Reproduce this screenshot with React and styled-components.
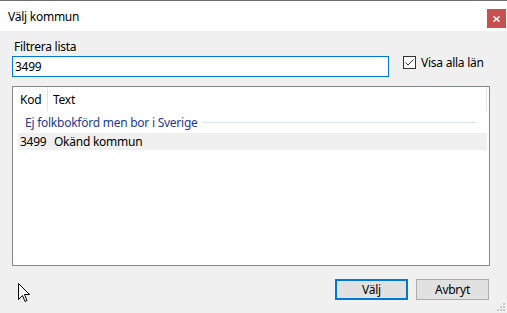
import React from "react";
import styled, { createGlobalStyle } from "styled-components";

const GlobalStyle = createGlobalStyle`
  html, body {
    margin: 0;
    padding: 0;
    background: #f0f0f0;
  }
  * {
    box-sizing: border-box;
  }
`;

const Window = styled.div`
  position: relative;
  width: 507px;
  height: 313px;
  display: flex;
  flex-direction: column;
  background: #f0f0f0;
  border-top: 1px solid #6f6f6f;
  font-family: "Noto Sans", "Liberation Sans", sans-serif;
  font-size: 12px;
  letter-spacing: -0.25px;
  color: #000;
  overflow: hidden;
`;

const TitleBar = styled.div`
  height: 30px;
  background: #fff;
  display: flex;
  align-items: center;
  justify-content: space-between;
  padding: 0 1px 0 8px;
  font-size: 12px;
`;

const CloseButton = styled.div`
  width: 19px;
  height: 19px;
  background: #c75050;
  display: flex;
  align-items: center;
  justify-content: center;
  margin-top: 5px;
`;

const Content = styled.div`
  flex: 1;
  display: flex;
  flex-direction: column;
  padding: 8px 17px 0 12px;
`;

const FilterRow = styled.div`
  display: flex;
  align-items: flex-end;
  gap: 14px;
`;

const FilterColumn = styled.div`
  display: flex;
  flex-direction: column;
  width: 377px;
`;

const Label = styled.label`
  line-height: 16px;
  padding-left: 2px;
  margin-bottom: 1px;
`;

const Input = styled.div`
  height: 21px;
  border: 1px solid #0078d7;
  background: #fff;
  padding: 0 2px;
  display: flex;
  align-items: center;
`;

const CheckLabel = styled.div`
  display: flex;
  align-items: center;
  gap: 5px;
  margin-bottom: 6px;
`;

const Box = styled.div`
  width: 13px;
  height: 13px;
  border: 1px solid #333;
  background: #fff;
  display: flex;
  align-items: center;
  justify-content: center;
`;

const ListBox = styled.div`
  margin-top: 9px;
  height: 180px;
  border: 1px solid #828790;
  background: #fff;
  padding-right: 2px;
`;

const HeaderRow = styled.div`
  display: flex;
  height: 24px;
  border-right: 1px solid #e5e5e5;
`;

const HeaderCell = styled.div`
  width: ${(p) => p.$width || "auto"};
  flex: ${(p) => (p.$width ? "none" : 1)};
  display: flex;
  align-items: center;
  padding-left: ${(p) => p.$pad}px;
  border-right: ${(p) => (p.$divider ? "1px solid #e5e5e5" : "none")};
`;

const GroupRow = styled.div`
  height: 22px;
  display: flex;
  align-items: center;
  gap: 4px;
  padding: 0 10px 0 12px;
  color: #1e3793;
  &::after {
    content: "";
    flex: 1;
    height: 1px;
    background: #dbe3f2;
  }
`;

const ItemRow = styled.div`
  height: 17px;
  margin-left: 5px;
  display: flex;
  align-items: center;
  background: #f0f0f0;
`;

const ItemCell = styled.div`
  width: ${(p) => p.$width || "auto"};
  padding-left: ${(p) => p.$pad}px;
`;

const ButtonRow = styled.div`
  display: flex;
  justify-content: flex-end;
  gap: 8px;
  margin-top: 13px;
  padding-right: 1px;
`;

const Button = styled.div`
  width: 73px;
  height: 21px;
  background: #e1e1e1;
  border: ${(p) => (p.$default ? "2px solid #0078d7" : "1px solid #adadad")};
  display: flex;
  align-items: center;
  justify-content: center;
`;

const Cursor = styled.svg`
  position: absolute;
  left: 18px;
  top: 282px;
`;

const Grip = styled.svg`
  position: absolute;
  right: 1px;
  bottom: 1px;
`;

const App = () => {
  return (
    <Window>
      <GlobalStyle />
      <TitleBar>
        <span>Välj kommun</span>
        <CloseButton>
          <svg width="7" height="6" viewBox="0 0 7 6">
            <path d="M0.5 0.5 L6.5 5.5 M6.5 0.5 L0.5 5.5" stroke="#fff" strokeWidth="1.6" />
          </svg>
        </CloseButton>
      </TitleBar>
      <Content>
        <FilterRow>
          <FilterColumn>
            <Label>Filtrera lista</Label>
            <Input>3499</Input>
          </FilterColumn>
          <CheckLabel>
            <Box>
              <svg width="11" height="11" viewBox="0 0 11 11">
                <path d="M1.5 5.5 L4 8 L9.5 2.5" fill="none" stroke="#333" strokeWidth="1" />
              </svg>
            </Box>
            <span>Visa alla län</span>
          </CheckLabel>
        </FilterRow>
        <ListBox>
          <HeaderRow>
            <HeaderCell $width="35px" $pad={7} $divider>
              Kod
            </HeaderCell>
            <HeaderCell $pad={5}>Text</HeaderCell>
          </HeaderRow>
          <GroupRow>Ej folkbokförd men bor i Sverige</GroupRow>
          <ItemRow>
            <ItemCell $width="31px" $pad={2}>
              3499
            </ItemCell>
            <ItemCell $pad={5}>Okänd kommun</ItemCell>
          </ItemRow>
        </ListBox>
        <ButtonRow>
          <Button $default>Välj</Button>
          <Button>Avbryt</Button>
        </ButtonRow>
      </Content>
      <Cursor width="13" height="20" viewBox="0 0 13 20">
        <path
          d="M0.5 0.5 L0.5 16.5 L4.5 12.5 L7 18.5 L9 17.5 L6.5 11.5 L11.5 11.5 Z"
          fill="#fff"
          stroke="#000"
          strokeWidth="1"
        />
      </Cursor>
      <Grip width="10" height="10" viewBox="0 0 10 10">
        <rect x="7" y="1" width="2" height="2" fill="#c8c8c8" />
        <rect x="4" y="4" width="2" height="2" fill="#c8c8c8" />
        <rect x="7" y="4" width="2" height="2" fill="#c8c8c8" />
        <rect x="1" y="7" width="2" height="2" fill="#c8c8c8" />
        <rect x="4" y="7" width="2" height="2" fill="#c8c8c8" />
        <rect x="7" y="7" width="2" height="2" fill="#c8c8c8" />
      </Grip>
    </Window>
  );
};

export default App;
